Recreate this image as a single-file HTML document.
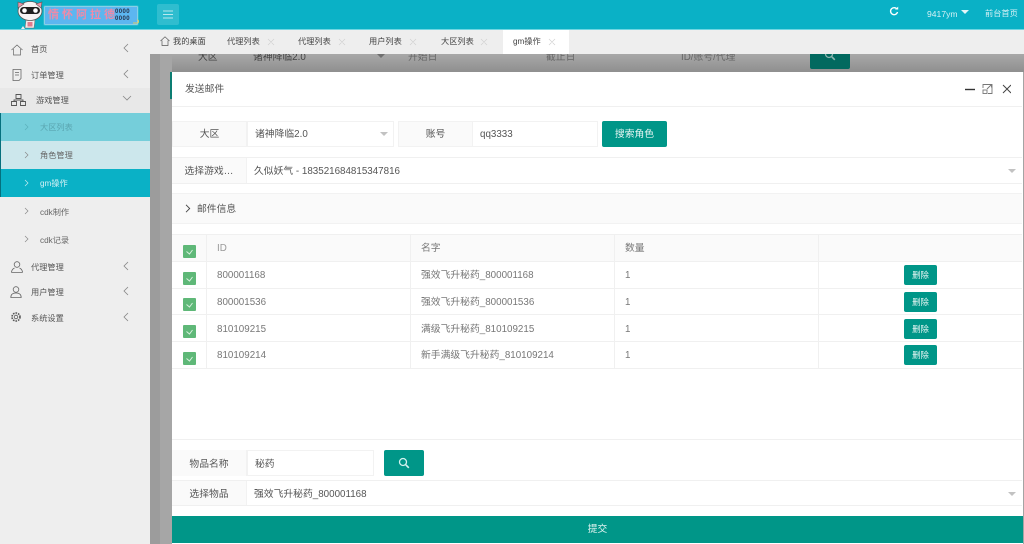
<!DOCTYPE html>
<html lang="zh"><head><meta charset="utf-8"><title>gm操作</title>
<style>
*{box-sizing:border-box}
html,body{margin:0;padding:0}
body{width:1024px;height:544px;overflow:hidden;position:relative;background:#fff;font-family:"Liberation Sans","Noto Sans CJK SC",sans-serif;font-size:10px;color:#666}
.a{position:absolute;white-space:nowrap}
.hdr{left:0;top:0;width:1024px;height:30px;background:#0ab1c6;border-bottom:1px solid #6fd6e2}
.side{left:0;top:30px;width:150px;height:514px;background:#eee}
.tabs{left:150px;top:30px;width:874px;height:24px;background:#eee}
.tab{top:36px;font-size:8.2px;color:#444;line-height:12px}
.m{font-size:8.2px;color:#555;line-height:12px;left:31px}
.s{font-size:8.2px;color:#666;line-height:12px;left:40px}
.lab{background:#fafafa;border:1px solid #f2f2f2;text-align:center;color:#555;font-size:9.8px;overflow:hidden}
.inp{background:#fff;border:1px solid #f2f2f2;color:#555;font-size:9.8px;padding-left:7px}
.btn{background:#009688;border-radius:2px}
.cell{font-size:9.8px;color:#777;line-height:12px}
.ck{left:183px;width:13px;height:13px;background:#5fb878;border-radius:1px}
.del{left:904px;width:33px;height:20px;background:#009688;border-radius:2px;color:#e8f6f4;font-size:8.4px;text-align:center;line-height:20px}
.ln{background:#f0f0f0;height:1px;left:172px;width:850px}
.vl{background:#f0f0f0;width:1px;top:235px;height:134px}
.tri{width:0;height:0;border-left:4px solid transparent;border-right:4px solid transparent;border-top:4px solid #c2c2c2}
</style></head><body>

<div class="a" style="left:150px;top:54px;width:874px;height:490px;background:#a4a4a4"></div>
<div class="a" style="left:150px;top:54px;width:10px;height:490px;background:#9c9c9c"></div>
<div class="a" style="left:160px;top:54px;width:12px;height:490px;background:#a6a6a6"></div>
<div class="a" style="left:172px;top:54px;width:852px;height:18px;background:linear-gradient(#a8a8a8,#8f8f8f)"></div>
<div class="a" style="left:198px;top:51px;font-size:9.8px;color:#444;line-height:13px">大区</div>
<div class="a" style="left:253px;top:51px;font-size:9.8px;color:#444;line-height:13px">诸神降临2.0</div>
<div class="a" style="left:408px;top:51px;font-size:9.8px;color:#666;line-height:13px">开始日</div>
<div class="a" style="left:546px;top:51px;font-size:9.8px;color:#666;line-height:13px">截止日</div>
<div class="a" style="left:681px;top:51px;font-size:9.8px;color:#666;line-height:13px">ID/账号/代理</div>
<div class="a" style="left:810px;top:54px;width:40px;height:15px;background:#02695f;border-radius:0 0 2px 2px"></div>
<svg class="a" style="left:824px;top:54px" width="12" height="8" viewBox="0 0 12 8"><circle cx="5" cy="0" r="3.500" fill="none" stroke="#8fb5b0" stroke-width="1.300"/><path d="M7.800 2.800l3 3" stroke="#8fb5b0" stroke-width="1.600"/></svg>
<div class="a tri" style="left:377px;top:54px;border-top-color:#6f6f6f"></div>

<div class="a hdr"></div>
<svg class="a" style="left:15px;top:0" width="30" height="30" viewBox="0 0 30 30"><path d="M11 20l-1 8h9l1-8z" fill="#f2ecec" stroke="#777" stroke-width=".6"/><rect x="12.500" y="22" width="5" height="4.500" fill="#e07a8c"/><path d="M8 26l-2 3h4z" fill="#eee"/><ellipse cx="15" cy="11" rx="12" ry="9.500" fill="#f6f2f2" stroke="#555" stroke-width=".8"/><path d="M3 8V2l6 2zM26 8l1-6-6 2z" fill="#ec93a6" stroke="#555" stroke-width=".6"/><rect x="5" y="7" width="20" height="7" rx="3.500" fill="#1f1f1f"/><circle cx="9.500" cy="10.500" r="2.300" fill="#fff"/><circle cx="20.500" cy="10.500" r="2.300" fill="#fff"/></svg>
<div class="a" style="left:45px;top:7px;width:92px;height:17px;background:#5cb6f0;box-shadow:0 0 1px 1px #a8d8ee"></div>
<div class="a" style="left:48px;top:8px;font-size:11px;font-weight:bold;line-height:15px;color:#f08aa8;letter-spacing:3px">情怀阿拉德</div>
<div class="a" style="left:115px;top:9px;font-size:6px;line-height:6.5px;color:#27324a;font-weight:bold;letter-spacing:.4px;white-space:normal;width:22px">0000 0000</div>
<svg class="a" style="left:132px;top:18px" width="8" height="7"><path d="M1 5h4c2 0 2-3 0-3" fill="none" stroke="#e4cf62" stroke-width="1"/></svg>
<div class="a" style="left:157px;top:4px;width:22px;height:21px;background:#2fbdcf;border-radius:2px"></div>
<svg class="a" style="left:163px;top:10px" width="10" height="9"><path d="M0 1h10M0 4.500h10M0 8h10" stroke="#b8e8ee" stroke-width="1"/></svg>
<svg class="a" style="left:889px;top:6px" width="10" height="10" viewBox="0 0 10 10"><path d="M8 3.200A3.500 3.500 0 1 0 8.500 6" fill="none" stroke="#fff" stroke-width="1.400"/><path d="M6 3.500h3.200V.6z" fill="#fff"/></svg>
<div class="a" style="left:927px;top:8px;font-size:8.6px;line-height:12px;color:#d5f1f5">9417ym</div>
<div class="a tri" style="left:961px;top:10px;border-top-color:#e4f6f8"></div>
<div class="a" style="left:985px;top:8px;font-size:8.2px;line-height:12px;color:#d5f1f5">前台首页</div>

<div class="a side"></div>
<div class="a" style="left:0;top:88px;width:150px;height:25px;background:#e8e8e8"></div>
<div class="a" style="left:0;top:113px;width:150px;height:28px;background:#75ceda"></div>
<div class="a" style="left:0;top:141px;width:150px;height:28px;background:#cce7ec"></div>
<div class="a" style="left:0;top:169px;width:150px;height:28px;background:#0ab1c6"></div>
<div class="a" style="left:0;top:113px;width:1px;height:84px;background:#05707d"></div>

<svg class="a" style="left:11px;top:44px" width="12" height="12" viewBox="0 0 12 12"><path d="M.5 6L6 1l5.500 5M2.500 5v6h7V5" fill="none" stroke="#666" stroke-width=".7"/></svg>
<div class="a m" style="top:44px">首页</div>
<svg class="a" style="left:12px;top:69px" width="10" height="12" viewBox="0 0 10 12"><path d="M1 .5h8v9l-2 2H1zM3 3.500h4M3 6h4" fill="none" stroke="#666" stroke-width=".8"/></svg>
<div class="a m" style="top:70px">订单管理</div>
<svg class="a" style="left:11px;top:94px" width="15" height="12" viewBox="0 0 15 12"><path d="M5 .5h5v4H5zM.5 7.500h5v4h-5zM9.500 7.500h5v4h-5zM3 7.500V6h9v1.500" fill="none" stroke="#555" stroke-width=".9"/></svg>
<div class="a m" style="top:95px;left:36px">游戏管理</div>
<svg class="a" style="left:11px;top:261px" width="12" height="12" viewBox="0 0 12 12"><circle cx="6" cy="3.500" r="2.800" fill="none" stroke="#666" stroke-width=".8"/><path d="M.5 11.500c0-3 2-4 3-4.500M11.500 11.500c0-3-2-4-3-4.500M.5 11.500h11" fill="none" stroke="#666" stroke-width=".8"/></svg>
<div class="a m" style="top:262px">代理管理</div>
<svg class="a" style="left:10px;top:286px" width="12" height="12" viewBox="0 0 12 12"><circle cx="6" cy="3.500" r="2.800" fill="none" stroke="#666" stroke-width=".8"/><path d="M.8 11.500c0-3 2-4.500 5.200-4.500s5.200 1.500 5.200 4.500z" fill="none" stroke="#666" stroke-width=".8"/></svg>
<div class="a m" style="top:287px">用户管理</div>
<svg class="a" style="left:10px;top:311px" width="12" height="12" viewBox="0 0 12 12"><circle cx="6" cy="6" r="1.800" fill="none" stroke="#555" stroke-width=".8"/><circle cx="6" cy="6" r="4" fill="none" stroke="#555" stroke-width="1.600" stroke-dasharray="1.600 1"/></svg>
<div class="a m" style="top:313px">系统设置</div>

<svg class="a" style="left:122px;top:43px" width="10" height="290" viewBox="0 0 10 290"><path d="M6 1L2 5l4 4M6 27l-4 4 4 4" fill="none" stroke="#888" stroke-width=".8"/><path d="M1 53l4 4 4-4" fill="none" stroke="#888" stroke-width=".8"/><path d="M6 219l-4 4 4 4M6 244l-4 4 4 4M6 270l-4 4 4 4" fill="none" stroke="#888" stroke-width=".8"/></svg>
<svg class="a" style="left:24px;top:123px" width="5" height="122" viewBox="0 0 5 122"><path d="M1 1l3 3-3 3" fill="none" stroke="#5ab0bb" stroke-width=".7"/><path d="M1 29l3 3-3 3" fill="none" stroke="#888" stroke-width=".7"/><path d="M1 57l3 3-3 3" fill="none" stroke="#c9eef3" stroke-width=".7"/><path d="M1 85l3 3-3 3M1 113l3 3-3 3" fill="none" stroke="#888" stroke-width=".7"/></svg>

<div class="a s" style="top:122px;color:#5aa5b0">大区列表</div>
<div class="a s" style="top:150px">角色管理</div>
<div class="a s" style="top:178px;color:#d5f1f5">gm操作</div>
<div class="a s" style="top:207px">cdk制作</div>
<div class="a s" style="top:235px">cdk记录</div>

<div class="a tabs"></div>
<div class="a" style="left:503px;top:30px;width:66px;height:24px;background:#fff"></div>
<svg class="a" style="left:160px;top:36px" width="10" height="10" viewBox="0 0 10 10"><path d="M.5 5L5 .8 9.500 5M2 4.500v5h6v-5" fill="none" stroke="#555" stroke-width=".7"/></svg>
<div class="a tab" style="left:173px">我的桌面</div>
<div class="a tab" style="left:227px">代理列表</div>
<div class="a tab" style="left:298px">代理列表</div>
<div class="a tab" style="left:369px">用户列表</div>
<div class="a tab" style="left:441px">大区列表</div>
<div class="a tab" style="left:513px">gm操作</div>
<svg class="a" style="left:267px;top:38px" width="292" height="8" viewBox="0 0 292 8"><path d="M1 1l6 6M7 1l-6 6M72 1l6 6M78 1l-6 6M143 1l6 6M149 1l-6 6M214 1l6 6M220 1l-6 6M282 1l6 6M288 1l-6 6" stroke="#d0d0d0" stroke-width=".7" fill="none"/></svg>

<div class="a" style="left:172px;top:72px;width:851px;height:472px;background:#fff"></div>
<div class="a" style="left:170px;top:72px;width:2px;height:27px;background:#0c7d72"></div>
<div class="a" style="left:185px;top:83px;font-size:9.8px;line-height:13px;color:#555">发送邮件</div>
<div class="a ln" style="top:106px"></div>
<svg class="a" style="left:965px;top:83px" width="46" height="12" viewBox="0 0 46 12"><path d="M0 6.500h10" stroke="#333" stroke-width="1.400"/><path d="M18 5V1.500h9v9h-4M22 6l4.500-4.500M23.500 1.500h3v3" fill="none" stroke="#777" stroke-width=".9"/><rect x="18" y="7" width="4" height="3.500" fill="none" stroke="#777" stroke-width=".9"/><path d="M38 2l8 8M46 2l-8 8" stroke="#444" stroke-width="1"/></svg>

<div class="a lab" style="left:172px;top:121px;width:75px;height:26px;line-height:25px">大区</div>
<div class="a inp" style="left:247px;top:121px;width:147px;height:26px;line-height:25px">诸神降临2.0</div>
<div class="a tri" style="left:380px;top:132px"></div>
<div class="a lab" style="left:398px;top:121px;width:75px;height:26px;line-height:25px">账号</div>
<div class="a inp" style="left:472px;top:121px;width:126px;height:26px;line-height:25px">qq3333</div>
<div class="a btn" style="left:602px;top:121px;width:65px;height:26px;line-height:27px;text-align:center;color:#e5f5f3;font-size:9.8px">搜索角色</div>

<div class="a ln" style="top:157px"></div>
<div class="a lab" style="left:172px;top:158px;width:75px;height:25px;line-height:28px;border-width:0 1px 0 0">选择游戏…</div>
<div class="a" style="left:254px;top:165px;font-size:9.8px;line-height:13px;color:#555">久似妖气 - 183521684815347816</div>
<div class="a tri" style="left:1008px;top:169px"></div>
<div class="a ln" style="top:183px"></div>

<div class="a" style="left:172px;top:193px;width:850px;height:31px;background:#fafafa;border-top:1px solid #f2f2f2;border-bottom:1px solid #f2f2f2"></div>
<svg class="a" style="left:185px;top:204px" width="6" height="9" viewBox="0 0 6 9"><path d="M1 .8l3.700 3.700L1 8.200" fill="none" stroke="#444" stroke-width=".9"/></svg>
<div class="a" style="left:197px;top:203px;font-size:9.8px;line-height:13px;color:#555">邮件信息</div>

<div class="a" style="left:172px;top:235px;width:850px;height:27px;background:#fafafa"></div>
<div class="a ln" style="top:234px"></div><div class="a ln" style="top:261px"></div><div class="a ln" style="top:288px"></div><div class="a ln" style="top:314px"></div><div class="a ln" style="top:341px"></div><div class="a ln" style="top:368px"></div>
<div class="a vl" style="left:206px"></div><div class="a vl" style="left:410px"></div><div class="a vl" style="left:614px"></div><div class="a vl" style="left:818px"></div>

<div class="a cell" style="left:217px;top:243px;color:#999">ID</div><div class="a cell" style="left:421px;top:243px">名字</div><div class="a cell" style="left:625px;top:243px">数量</div>
<div class="a cell" style="left:217px;top:270px">800001168</div><div class="a cell" style="left:421px;top:270px">强效飞升秘药_800001168</div><div class="a cell" style="left:625px;top:270px">1</div>
<div class="a cell" style="left:217px;top:297px">800001536</div><div class="a cell" style="left:421px;top:297px">强效飞升秘药_800001536</div><div class="a cell" style="left:625px;top:297px">1</div>
<div class="a cell" style="left:217px;top:324px">810109215</div><div class="a cell" style="left:421px;top:324px">满级飞升秘药_810109215</div><div class="a cell" style="left:625px;top:324px">1</div>
<div class="a cell" style="left:217px;top:350px">810109214</div><div class="a cell" style="left:421px;top:350px">新手满级飞升秘药_810109214</div><div class="a cell" style="left:625px;top:350px">1</div>

<div class="a ck" style="top:245px"></div><div class="a ck" style="top:272px"></div><div class="a ck" style="top:298px"></div><div class="a ck" style="top:325px"></div><div class="a ck" style="top:352px"></div>
<svg class="a" style="left:183px;top:245px" width="13" height="120" viewBox="0 0 13 120"><path d="M3.500 6.500l3 2.500 3-4M3.500 33.500l3 2.500 3-4M3.500 59.500l3 2.500 3-4M3.500 86.500l3 2.500 3-4M3.500 113.500l3 2.500 3-4" fill="none" stroke="#d7f0de" stroke-width="1"/></svg>

<div class="a del" style="top:265px">删除</div><div class="a del" style="top:292px">删除</div><div class="a del" style="top:319px">删除</div><div class="a del" style="top:345px">删除</div>

<div class="a ln" style="top:439px"></div>
<div class="a lab" style="left:172px;top:450px;width:75px;height:26px;line-height:29px;border-width:0 1px 0 0">物品名称</div>
<div class="a inp" style="left:247px;top:450px;width:127px;height:26px;line-height:27px">秘药</div>
<div class="a btn" style="left:384px;top:450px;width:40px;height:26px"></div>
<svg class="a" style="left:398px;top:457px" width="12" height="12" viewBox="0 0 12 12"><circle cx="5" cy="5" r="3.500" fill="none" stroke="#d5f1ee" stroke-width="1.300"/><path d="M7.800 7.800l3 3" stroke="#d5f1ee" stroke-width="1.600"/></svg>
<div class="a ln" style="top:480px"></div>
<div class="a lab" style="left:172px;top:481px;width:75px;height:25px;line-height:27px;border-width:0 1px 0 0">选择物品</div>
<div class="a" style="left:254px;top:488px;font-size:9.8px;line-height:13px;color:#555">强效飞升秘药_800001168</div>
<div class="a tri" style="left:1008px;top:492px"></div>
<div class="a ln" style="top:505px"></div>
<div class="a" style="left:172px;top:516px;width:851px;height:27px;background:#009688;color:#dff3f0;text-align:center;line-height:28px;font-size:9.8px">提交</div>
</body></html>
